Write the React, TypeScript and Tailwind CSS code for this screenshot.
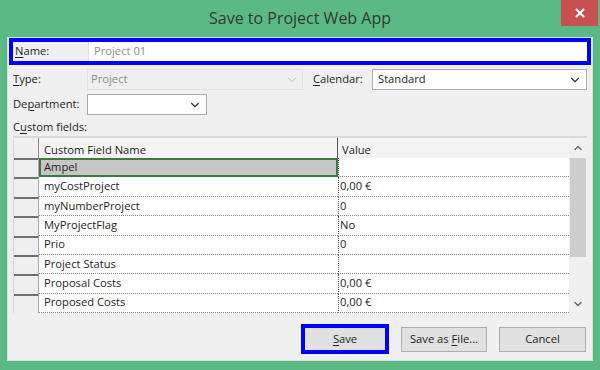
import { ChevronDown, ChevronUp, X } from 'lucide-react';

const rows = [
  { name: 'Ampel', value: '' },
  { name: 'myCostProject', value: '0,00 €' },
  { name: 'myNumberProject', value: '0' },
  { name: 'MyProjectFlag', value: 'No' },
  { name: 'Prio', value: '0' },
  { name: 'Project Status', value: '' },
  { name: 'Proposal Costs', value: '0,00 €' },
  { name: 'Proposed Costs', value: '0,00 €' },
];

const font = { fontFamily: '"Segoe UI", "Open Sans", "Noto Sans", sans-serif' };

const Key = ({ children }: { children: string }) => <span className="underline underline-offset-2">{children}</span>;

export default function App() {
  return (
    <div className="w-[600px] h-[370px] bg-[#5bb985] flex flex-col text-[11.2px] text-[#1e1e1e]" style={font}>
      {/* title bar */}
      <div className="h-[37px] flex relative">
        <div className="flex-1 text-center text-[16px] text-[#2f3a33] pt-[6px]">Save to Project Web App</div>
        <div className="absolute right-[2px] top-0 w-[37px] h-[26px] bg-[#c75050] flex items-center justify-center">
          <X size={14} strokeWidth={3.5} className="text-white" />
        </div>
      </div>

      {/* body */}
      <div className="mx-[7px] h-[324px] bg-[#f0f0f0] border border-[#d0e6d8] flex flex-col">
        {/* name */}
        <div className="mx-[1px] mt-[0px] h-[27px] border-4 border-[#0000ff] flex">
          <div className="w-[75px] pl-[2px] flex items-center bg-[#f0f0f0]">
            <span><Key>N</Key>ame:</span>
          </div>
          <div className="flex-1 bg-white border-l border-[#e0e0e0] flex items-center pl-[5px] text-[#8c8c8c]">Project 01</div>
        </div>

        {/* type / calendar */}
        <div className="mt-[4px] h-[21px] flex items-center pl-[5px]">
          <div className="w-[74px]"><Key>T</Key>ype:</div>
          <div className="w-[216px] h-full bg-[#efefef] border border-[#e2e2e2] flex items-center pl-[3px] text-[#8d8d8d]">
            <span className="flex-1">Project</span>
            <ChevronDown size={14} strokeWidth={1.3} className="text-[#b0b0b0] mr-[3px]" />
          </div>
          <div className="w-[69px] pl-[10px]"><Key>C</Key>alendar:</div>
          <div className="w-[215px] h-full bg-white border border-[#abadb3] flex items-center pl-[5px]">
            <span className="flex-1">Standard</span>
            <ChevronDown size={14} strokeWidth={2} className="text-[#333] mr-[4px]" />
          </div>
        </div>

        {/* department */}
        <div className="mt-[4px] h-[21px] flex items-center pl-[5px]">
          <div className="w-[74px]">De<Key>p</Key>artment:</div>
          <div className="w-[120px] h-full bg-white border border-[#abadb3] flex items-center justify-end">
            <ChevronDown size={14} strokeWidth={2} className="text-[#333] mr-[4px]" />
          </div>
        </div>

        <div className="mt-[4px] h-[16px] pl-[5px] leading-[16px]">C<Key>u</Key>stom fields:</div>

        {/* grid */}
        <div className="mt-[1px] ml-[5px] w-[574px] h-[177px] border-t-2 border-[#dadada] border-l border-[#a0a0a0] flex bg-white">
          <div className="flex-1 flex flex-col">
            <div className="h-[20px] flex bg-[#f4f4f4]">
              <div className="w-[25px] border-r border-[#8a8a8a] bg-[#f0f0f0]" />
              <div className="w-[299px] border-r border-[#5a5a5a] pl-[5px] flex items-end leading-[17px]">Custom Field Name</div>
              <div className="flex-1 pl-[4px] flex items-end leading-[17px]">Value</div>
            </div>
            {rows.map((r, i) => (
              <div key={r.name} className="h-[19.4px] flex">
                <div className="w-[25px] bg-[#f0f0f0] border-t-2 border-[#707070] border-r border-r-[#a8a8a8]" />
                {i === 0 ? (
                  <div className="w-[299px] bg-[#c6c6c6] border-2 border-[#3c7a3e] pl-[3px] flex items-center">{r.name}</div>
                ) : (
                  <div className="w-[299px] border-b border-dotted border-[#8a8a8a] pl-[5px] flex items-center">{r.name}</div>
                )}
                <div className="flex-1 border-b border-dotted border-[#8a8a8a] border-l border-l-[#555] pl-[1px] flex items-center">{r.value}</div>
              </div>
            ))}
          </div>
          {/* scrollbar */}
          <div className="w-[18px] bg-[#f0f0f0] flex flex-col">
            <div className="h-[20px] flex items-center justify-center">
              <ChevronUp size={12} strokeWidth={2.5} className="text-[#606060]" />
            </div>
            <div className="h-[99px] bg-[#cdcdcd] mx-[1px]" />
            <div className="flex-1" />
            <div className="h-[19px] flex items-center justify-center">
              <ChevronDown size={12} strokeWidth={2.5} className="text-[#606060]" />
            </div>
          </div>
        </div>

        {/* buttons */}
        <div className="mt-[11px] flex items-center justify-end gap-[12px] pr-[6px]">
          <div className="w-[88px] h-[30px] border-4 border-[#0000ff] bg-[#e1e1e1] flex items-center justify-center">
            <span><Key>S</Key>ave</span>
          </div>
          <div className="w-[86px] h-[25px] border border-[#adadad] bg-[#e1e1e1] flex items-center justify-center">
            <span>Save as <Key>F</Key>ile...</span>
          </div>
          <div className="w-[87px] h-[25px] border border-[#adadad] bg-[#e1e1e1] flex items-center justify-center">
            Cancel
          </div>
        </div>
      </div>
    </div>
  );
}
